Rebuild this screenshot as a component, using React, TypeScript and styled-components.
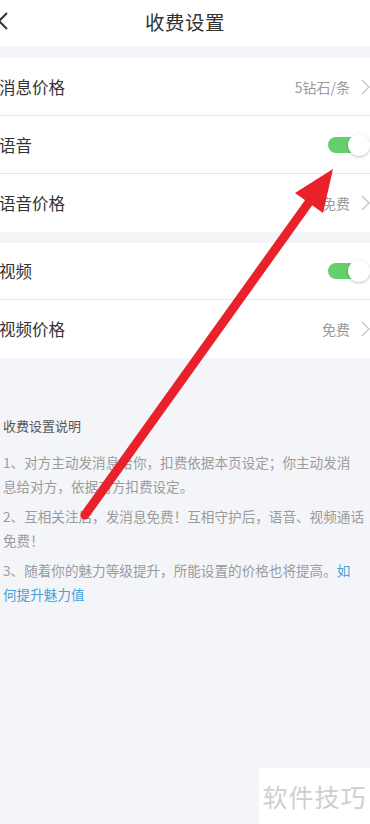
import React from "react";
import styled, { createGlobalStyle } from "styled-components";

const Global = createGlobalStyle`
  html, body { margin: 0; padding: 0; }
  body {
    background: #f4f5f9;
    font-family: "Noto Sans CJK SC", "Noto Sans", sans-serif;
    width: 370px;
    overflow: hidden;
  }
`;

const Page = styled.div`
  position: relative;
  width: 370px;
  height: 824px;
  background: #f4f5f9;
  overflow: hidden;
`;

const Header = styled.header`
  height: 46px;
  background: #ffffff;
  display: flex;
  align-items: center;
  justify-content: center;
  position: relative;
`;

const BackButton = styled.div`
  position: absolute;
  left: -1px;
  top: 11px;
  width: 10px;
  height: 20px;
  display: flex;
`;

const Title = styled.h1`
  margin: 0;
  font-size: 19.5px;
  font-weight: 400;
  color: #333;
  letter-spacing: 0.5px;
  margin-top: -4px;
`;

const Group = styled.section<{ $gap: number }>`
  margin-top: ${(p) => p.$gap}px;
  background: #ffffff;
  display: flex;
  flex-direction: column;
`;

const Row = styled.div<{ $h: number; $last?: boolean }>`
  height: ${(p) => p.$h}px;
  display: flex;
  align-items: center;
  justify-content: space-between;
  border-bottom: ${(p) => (p.$last ? "none" : "1px solid #e6e6e6")};
  box-sizing: border-box;
`;

const Label = styled.span`
  font-size: 16.5px;
  color: #333;
  margin-left: -1px;
`;

const Right = styled.div`
  display: flex;
  align-items: center;
  gap: 11px;
`;

const Value = styled.span`
  font-size: 14px;
  color: #9a9a9a;
`;

const Switch = styled.div`
  position: relative;
  width: 42px;
  height: 22px;
  display: flex;
  align-items: center;
  &::before {
    content: "";
    width: 34px;
    height: 16px;
    border-radius: 8px;
    background: #64cf6c;
  }
  &::after {
    content: "";
    position: absolute;
    right: 0;
    top: 0;
    width: 22px;
    height: 22px;
    border-radius: 50%;
    background: #fff;
    box-shadow: 0 1px 3px rgba(0, 0, 0, 0.25);
  }
`;

const Notes = styled.section`
  padding: 58px 2px 0 3px;
  display: flex;
  flex-direction: column;
`;

const NotesTitle = styled.div`
  font-size: 13px;
  color: #555;
  line-height: 20px;
  margin-bottom: 14px;
`;

const Para = styled.p`
  margin: 0 0 6px 0;
  font-size: 13.6px;
  line-height: 24px;
  color: #9b9b9b;
  white-space: nowrap;
`;

const Link = styled.span`
  color: #4aa0d8;
`;

const Watermark = styled.div`
  position: absolute;
  right: 0;
  bottom: 0;
  width: 111px;
  height: 56px;
  background: #ffffff;
  display: flex;
  align-items: center;
  justify-content: center;
  font-size: 25px;
  color: #cfcfcf;
  letter-spacing: 1px;
`;

const Overlay = styled.svg`
  position: absolute;
  left: 0;
  top: 0;
  width: 370px;
  height: 824px;
  pointer-events: none;
`;

const Chevron = () => (
  <svg width="9" height="16" viewBox="0 0 9 16">
    <polyline points="1,1 8,8 1,15" fill="none" stroke="#c4c4c4" strokeWidth="1.4" />
  </svg>
);

export default function App() {
  return (
    <Page>
      <Global />
      <Header>
        <BackButton>
          <svg width="10" height="20" viewBox="0 0 10 20">
            <polyline points="8,2 0,10 8,18" fill="none" stroke="#333" strokeWidth="2" />
          </svg>
        </BackButton>
        <Title>收费设置</Title>
      </Header>

      <Group $gap={12}>
        <Row $h={58}>
          <Label>消息价格</Label>
          <Right>
            <Value>5钻石/条</Value>
            <Chevron />
          </Right>
        </Row>
        <Row $h={58}>
          <Label>语音</Label>
          <Switch />
        </Row>
        <Row $h={58} $last>
          <Label>语音价格</Label>
          <Right>
            <Value>免费</Value>
            <Chevron />
          </Right>
        </Row>
      </Group>

      <Group $gap={11}>
        <Row $h={57}>
          <Label>视频</Label>
          <Switch />
        </Row>
        <Row $h={58} $last>
          <Label>视频价格</Label>
          <Right>
            <Value>免费</Value>
            <Chevron />
          </Right>
        </Row>
      </Group>

      <Notes>
        <NotesTitle>收费设置说明</NotesTitle>
        <Para>
          1、对方主动发消息给你，扣费依据本页设定；你主动发消
          <br />
          息给对方，依据对方扣费设定。
        </Para>
        <Para>
          2、互相关注后，发消息免费！互相守护后，语音、视频通话
          <br />
          免费！
        </Para>
        <Para>
          3、随着你的魅力等级提升，所能设置的价格也将提高。<Link>如</Link>
          <br />
          <Link>何提升魅力值</Link>
        </Para>
      </Notes>

      <Watermark>软件技巧</Watermark>

      <Overlay viewBox="0 0 370 824">
        <line x1="85" y1="515" x2="312" y2="198" stroke="#e8212a" strokeWidth="9" strokeLinecap="round" />
        <polygon points="333,169 295,193 323,213" fill="#e8212a" />
      </Overlay>
    </Page>
  );
}
